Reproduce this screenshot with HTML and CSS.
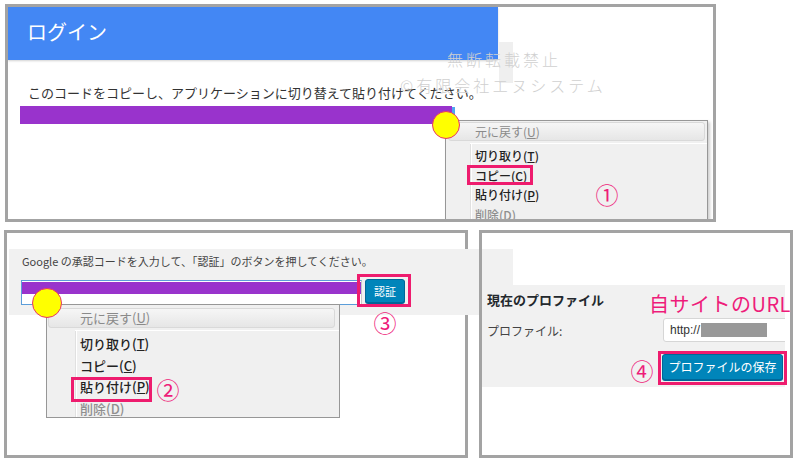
FILE: index.html
```html
<!DOCTYPE html>
<html lang="ja">
<head>
<meta charset="utf-8">
<title>Googleログイン手順</title>
<link rel="stylesheet" href="styles.css">
</head>
<body>
<div class="page">
  <section class="panel panel-top">
    <div class="login-head">ログイン</div>
    <p class="copy-msg">このコードをコピーし、アプリケーションに切り替えて貼り付けてください。</p>
    <div class="code-bar"><span class="code-bar-tail"></span></div>

    <div class="wm-box"></div>
    <div class="watermark">
      <div class="wm-line1">無断転載禁止</div>
      <div class="wm-line2">©有限会社エヌシステム</div>
    </div>

    <div class="ctx ctx-top">
      <div class="ctx-undo">元に戻す(<u>U</u>)</div>
      <div class="ctx-sep"></div>
      <div class="ctx-items">
        <div class="ctx-item">切り取り(<u>T</u>)</div>
        <div class="ctx-item">コピー(<u>C</u>)</div>
        <div class="ctx-item">貼り付け(<u>P</u>)</div>
        <div class="ctx-item is-disabled">削除(<u>D</u>)</div>
      </div>
    </div>
    <span class="dot dot-top"></span>
    <span class="mark mark-copy"></span>
    <span class="num num-1">①</span>
  </section>

  <div class="bottom-row">
    <section class="panel panel-auth">
      <div class="auth-band">
        <p class="auth-msg">Google の承認コードを入力して、「認証」のボタンを押してください。</p>
        <div class="auth-row">
          <div class="auth-input"><span class="auth-sel"></span></div>
          <button class="btn btn-auth" type="button">認証</button>
        </div>
      </div>

      <div class="ctx ctx-bottom">
        <div class="ctx-undo">元に戻す(<u>U</u>)</div>
        <div class="ctx-sep"></div>
        <div class="ctx-items">
          <div class="ctx-item">切り取り(<u>T</u>)</div>
          <div class="ctx-item">コピー(<u>C</u>)</div>
          <div class="ctx-item">貼り付け(<u>P</u>)</div>
          <div class="ctx-item is-disabled">削除(<u>D</u>)</div>
        </div>
      </div>
      <span class="dot dot-bottom"></span>
      <span class="mark mark-auth"></span>
      <span class="num num-3">③</span>
      <span class="mark mark-paste"></span>
      <span class="num num-2">②</span>
    </section>

    <section class="panel panel-profile">
      <div class="profile-box">
        <h3 class="profile-title">現在のプロファイル</h3>
        <div class="profile-row">
          <span class="profile-label">プロファイル:</span>
          <div class="profile-input">http://<span class="profile-mask"></span></div>
        </div>
        <div class="profile-actions">
          <button class="btn btn-save" type="button">プロファイルの保存</button>
        </div>
      </div>
      <span class="note-url">自サイトのURL</span>
      <span class="mark mark-save"></span>
      <span class="num num-4">④</span>
    </section>
  </div>
</div>
</body>
</html>
```

FILE: styles.css
```css
* { box-sizing: border-box; }

html, body {
  margin: 0;
  padding: 0;
  background: #ffffff;
}

body {
  font-family: "Noto Sans CJK JP", "Noto Sans", sans-serif;
  color: #333;
}

.page {
  width: 800px;
  height: 465px;
  padding: 4px 0 0 4px;
  overflow: hidden;
}

.panel {
  position: relative;
  border: 3px solid #a3a3a3;
  background: transparent;
}

/* ---------- top panel ---------- */
.panel-top {
  margin-left: 1px;
  width: 711px;
  height: 218px;
  overflow: hidden;
  background: #fff;
}

.login-head {
  width: 490px;
  height: 53px;
  background: #4387f4;
  color: #fff;
  font-size: 20px;
  line-height: 50px;
  padding-left: 19px;
  box-shadow: 0 1px 2px rgba(0,0,0,0.18);
}

.copy-msg {
  margin: 24px 0 0 0;
  padding-left: 20px;
  font-size: 13px;
  line-height: 18px;
  color: #333;
  white-space: nowrap;
}

.code-bar {
  position: relative;
  margin: 4px 0 0 12px;
  width: 432px;
  height: 18px;
  background: #9933cc;
}

.code-bar-tail {
  position: absolute;
  left: 432px;
  top: 1px;
  width: 3px;
  height: 10px;
  background: #4ea6f0;
}

.wm-box {
  position: absolute;
  left: 491px;
  top: 35px;
  width: 14px;
  height: 41px;
  background: #efefef;
}

.watermark {
  position: absolute;
  left: 392px;
  top: 41px;
  color: #d0d0d0;
  font-size: 16px;
  font-weight: 300;
  line-height: 22px;
  letter-spacing: 3px;
  white-space: nowrap;
}

.wm-line1 { padding-left: 47px; }
.wm-line2 { margin-top: 4px; letter-spacing: 3px; }

/* ---------- context menus ---------- */
.ctx {
  position: absolute;
  background: #f0f0f0;
  border: 1px solid #979797;
  box-shadow: 2px 2px 3px rgba(0,0,0,0.2);
  overflow: hidden;
  color: #222;
  white-space: nowrap;
}

.ctx u { text-decoration: underline; text-underline-offset: 1px; }

.ctx-undo {
  border: 1px solid #d9d9d9;
  border-radius: 3px;
  background: linear-gradient(#f6f6f6, #e6e6e6);
  color: #8a8a8a;
}

.ctx-sep {
  height: 1px;
  background: #e0e0e0;
  border-bottom: 1px solid #fff;
}

.ctx-items {
  border-left: 1px solid #e0e0e0;
  box-shadow: inset 1px 0 0 #fff;
}

.ctx-item.is-disabled { color: #8f8f8f; }

.ctx-top {
  left: 437px;
  top: 113px;
  width: 263px;
  height: 120px;
  font-size: 12px;
}

.ctx-top .ctx-undo {
  margin: 1px 2px 0 2px;
  height: 19px;
  line-height: 17px;
  padding-left: 26px;
}

.ctx-top .ctx-sep { margin: 2px 0 0 24px; }

.ctx-top .ctx-items {
  margin-left: 24px;
  padding: 2px 0 0 4px;
  height: 120px;
}

.ctx-top .ctx-item {
  height: 19.5px;
  line-height: 19.5px;
  font-weight: 500;
}

.ctx-bottom {
  left: 39px;
  top: 71px;
  width: 294px;
  height: 114px;
  font-size: 13px;
  box-shadow: none;
}

.ctx-bottom .ctx-undo {
  margin: 3px 4px 0 1px;
  height: 20px;
  line-height: 18px;
  padding-left: 31px;
}

.ctx-bottom .ctx-sep { margin: 2px 0 0 28px; }

.ctx-bottom .ctx-items {
  margin-left: 28px;
  padding: 2px 0 0 4px;
  height: 100px;
}

.ctx-bottom .ctx-item {
  height: 21.7px;
  line-height: 21.7px;
  font-weight: 500;
}

/* ---------- annotations ---------- */
.dot {
  position: absolute;
  border-radius: 50%;
  background: #ffff00;
  border: 1.5px solid #e8326c;
}

.dot-top { left: 424px; top: 104px; width: 28px; height: 28px; }
.dot-bottom { left: 25px; top: 55px; width: 30px; height: 30px; }

.mark {
  position: absolute;
  border: 3px solid #ee1c6e;
}

.mark-copy { left: 459px; top: 158px; width: 66px; height: 20px; }
.mark-auth { left: 350px; top: 41px; width: 54px; height: 33px; }
.mark-paste { left: 64px; top: 144px; width: 81px; height: 25px; }
.mark-save { left: 176px; top: 118px; width: 129px; height: 34px; }

.num {
  position: absolute;
  width: 24px;
  height: 24px;
  font-size: 23px;
  line-height: 24px;
  text-align: center;
  color: #ee1c7a;
}

.num-1 { left: 587px; top: 175px; }
.num-3 { left: 366px; top: 77px; }
.num-2 { left: 149px; top: 144px; }
.num-4 { left: 148px; top: 125px; }

.note-url {
  position: absolute;
  left: 167px;
  top: 58px;
  font-size: 20px;
  line-height: 26px;
  color: #ee1c7a;
  white-space: nowrap;
  letter-spacing: 0.5px;
}

/* ---------- bottom row ---------- */
.bottom-row {
  display: flex;
  gap: 11px;
  margin-top: 8px;
}

.panel-auth {
  width: 464px;
  height: 228px;
  background: #fff;
}

.auth-band {
  margin: 16px 0 0 2px;
  width: 504px;
  height: 66px;
  background: #f1f1f1;
  padding: 4px 0 0 12px;
}

.auth-msg {
  margin: 0 0 0 1px;
  font-size: 11px;
  line-height: 16px;
  color: #444;
  white-space: nowrap;
}

.auth-row {
  display: flex;
  align-items: flex-start;
  gap: 3px;
  margin-top: 10px;
}

.auth-input {
  width: 341px;
  height: 25px;
  margin-top: 1px;
  background: #fff;
  border: 1px solid #5b9dd9;
  border-right-color: #c8c8c8;
  padding: 1px 0 0 0;
}

.auth-sel {
  display: block;
  height: 12px;
  background: #9933cc;
}

.btn {
  font-family: "Noto Sans CJK JP", "Noto Sans", sans-serif;
  background: #0085ba;
  border: 1px solid #006799;
  border-radius: 3px;
  color: #fff;
  box-shadow: 0 1px 0 #006799;
  padding: 0;
  cursor: pointer;
}

.btn-auth {
  width: 40px;
  height: 24px;
  font-size: 11px;
  line-height: 20px;
}

.panel-profile {
  width: 314px;
  height: 228px;
}

.profile-box {
  margin-top: 52px;
  width: 303px;
  height: 102px;
  background: #f1f1f1;
  overflow: hidden;
  padding: 6px 0 0 5px;
}

.profile-title {
  margin: 0;
  font-size: 13px;
  line-height: 18px;
  font-weight: 700;
  color: #23282d;
  white-space: nowrap;
}

.profile-row {
  display: flex;
  align-items: center;
  margin-top: 9px;
  height: 24px;
}

.profile-label {
  flex: none;
  width: 176px;
  font-size: 12px;
  color: #444;
}

.profile-input {
  flex: none;
  width: 160px;
  height: 24px;
  background: #fff;
  border: 1px solid #d6d6d6;
  border-radius: 3px;
  font-family: "Liberation Sans", Arial, sans-serif;
  font-size: 12px;
  line-height: 22px;
  padding-left: 6px;
  color: #333;
  display: flex;
  align-items: center;
}

.profile-mask {
  display: inline-block;
  width: 66px;
  height: 14px;
  margin-left: 1px;
  background: #999;
}

.profile-actions {
  display: flex;
  margin-top: 12px;
  padding-left: 175px;
}

.btn-save {
  width: 121px;
  height: 26px;
  font-size: 12px;
  line-height: 22px;
}
```
